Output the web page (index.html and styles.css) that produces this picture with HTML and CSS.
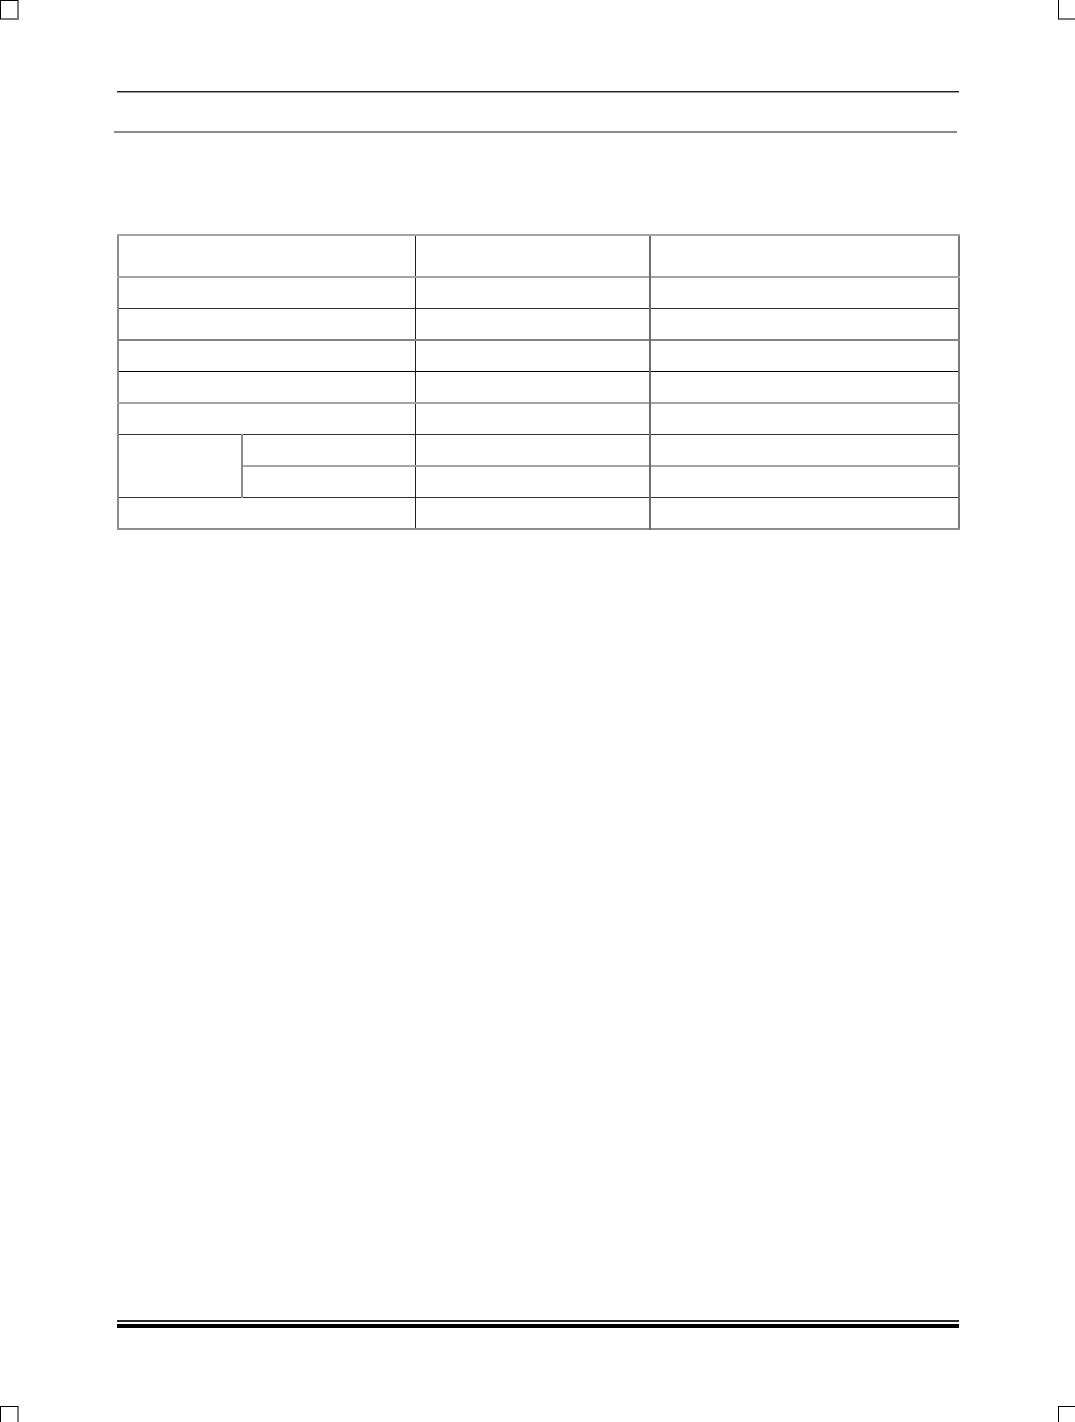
FILE: index.html
```html
<!DOCTYPE html>
<html>
<head>
<meta charset="utf-8">
<link rel="stylesheet" href="styles.css">
</head>
<body>
<div class="mark mark-tl"></div>
<div class="mark mark-tr"></div>
<div class="mark mark-bl"></div>
<div class="mark mark-br"></div>

<div class="page">
  <div class="rule-top"></div>
  <div class="rule-second"></div>

  <table class="grid">
    <colgroup>
      <col class="w-a">
      <col class="w-b">
      <col class="w-c">
      <col class="w-d">
    </colgroup>
    <tr class="row-head line-grey">
      <td colspan="2"></td><td class="c2"></td><td class="c3"></td>
    </tr>
    <tr class="line-grey">
      <td colspan="2"></td><td class="c2"></td><td class="c3"></td>
    </tr>
    <tr class="line-dark">
      <td colspan="2"></td><td class="c2"></td><td class="c3"></td>
    </tr>
    <tr class="line-grey2">
      <td colspan="2"></td><td class="c2"></td><td class="c3"></td>
    </tr>
    <tr class="line-black">
      <td colspan="2"></td><td class="c2"></td><td class="c3"></td>
    </tr>
    <tr class="line-grey">
      <td colspan="2"></td><td class="c2"></td><td class="c3"></td>
    </tr>
    <tr class="line-dark">
      <td rowspan="2"></td><td class="c1"></td><td class="c2"></td><td class="c3"></td>
    </tr>
    <tr class="line-grey">
      <td class="c1"></td><td class="c2"></td><td class="c3"></td>
    </tr>
    <tr class="line-dark">
      <td colspan="2"></td><td class="c2"></td><td class="c3"></td>
    </tr>
  </table>

  <div class="rule-bottom-thin"></div>
  <div class="rule-bottom-thick"></div>
</div>
</body>
</html>
```

FILE: styles.css
```css
html, body {
  margin: 0;
  padding: 0;
  background: #ffffff;
  font-family: "Liberation Serif", serif;
}

.page {
  display: flex;
  flex-direction: column;
  padding-top: 91px;
}

.rule-top {
  margin-left: 117px;
  width: 842px;
  height: 0;
  border-top: 1px solid #222;
  border-bottom: 1px solid #9a9a9a;
}

.rule-second {
  margin-top: 38px;
  margin-left: 114px;
  width: 843px;
  height: 0;
  border-top: 2px solid #8a8a8a;
}

.grid {
  margin-top: 101px;
  margin-left: 117px;
  width: 841px;
  border-collapse: collapse;
  table-layout: fixed;
  border-left: 2px solid #8c8c8c;
  border-right: 2px solid #7a7a7a;
  border-bottom: 2px solid #8c8c8c;
}

.w-a { width: 124px; }
.w-b { width: 173px; }
.w-c { width: 235px; }
.w-d { width: 309px; }

.grid td {
  padding: 0;
  height: 30px;
}

.grid .row-head td {
  height: 40px;
}

.grid td.c1 { border-left: 2px solid #8c8c8c; }
.grid td.c2 { border-left: 1px solid #1e1e1e; }
.grid td.c3 { border-left: 2px solid #6e6e6e; }

.line-grey td { border-top: 2px solid #a4a4a4; }
.line-grey2 td { border-top: 2px solid #858585; }
.line-dark td { border-top: 1px solid #333; }
.line-black td { border-top: 1px solid #000; }

.rule-bottom-thin {
  margin-top: 790px;
  margin-left: 117px;
  width: 842px;
  height: 0;
  border-top: 2px solid #2a2a2a;
}

.rule-bottom-thick {
  margin-top: 2px;
  margin-left: 117px;
  width: 842px;
  height: 4px;
  background: #000;
}

.mark {
  position: absolute;
  box-sizing: border-box;
}

.mark-tl {
  left: 0;
  top: 0;
  width: 19px;
  height: 20px;
  border-top: 1px solid #000;
  border-left: 1px solid #000;
  border-right: 2px solid #7a7a7a;
  border-bottom: 2px solid #7a7a7a;
}

.mark-tr {
  left: 1058px;
  top: 0;
  width: 17px;
  height: 20px;
  border-left: 1px solid #000;
  border-bottom: 2px solid #7a7a7a;
}

.mark-bl {
  left: 0;
  top: 1406px;
  width: 19px;
  height: 16px;
  border-top: 1px solid #000;
  border-left: 1px solid #000;
  border-right: 2px solid #7a7a7a;
}

.mark-br {
  left: 1058px;
  top: 1406px;
  width: 17px;
  height: 16px;
  border-top: 1px solid #000;
  border-left: 1px solid #000;
}
```
